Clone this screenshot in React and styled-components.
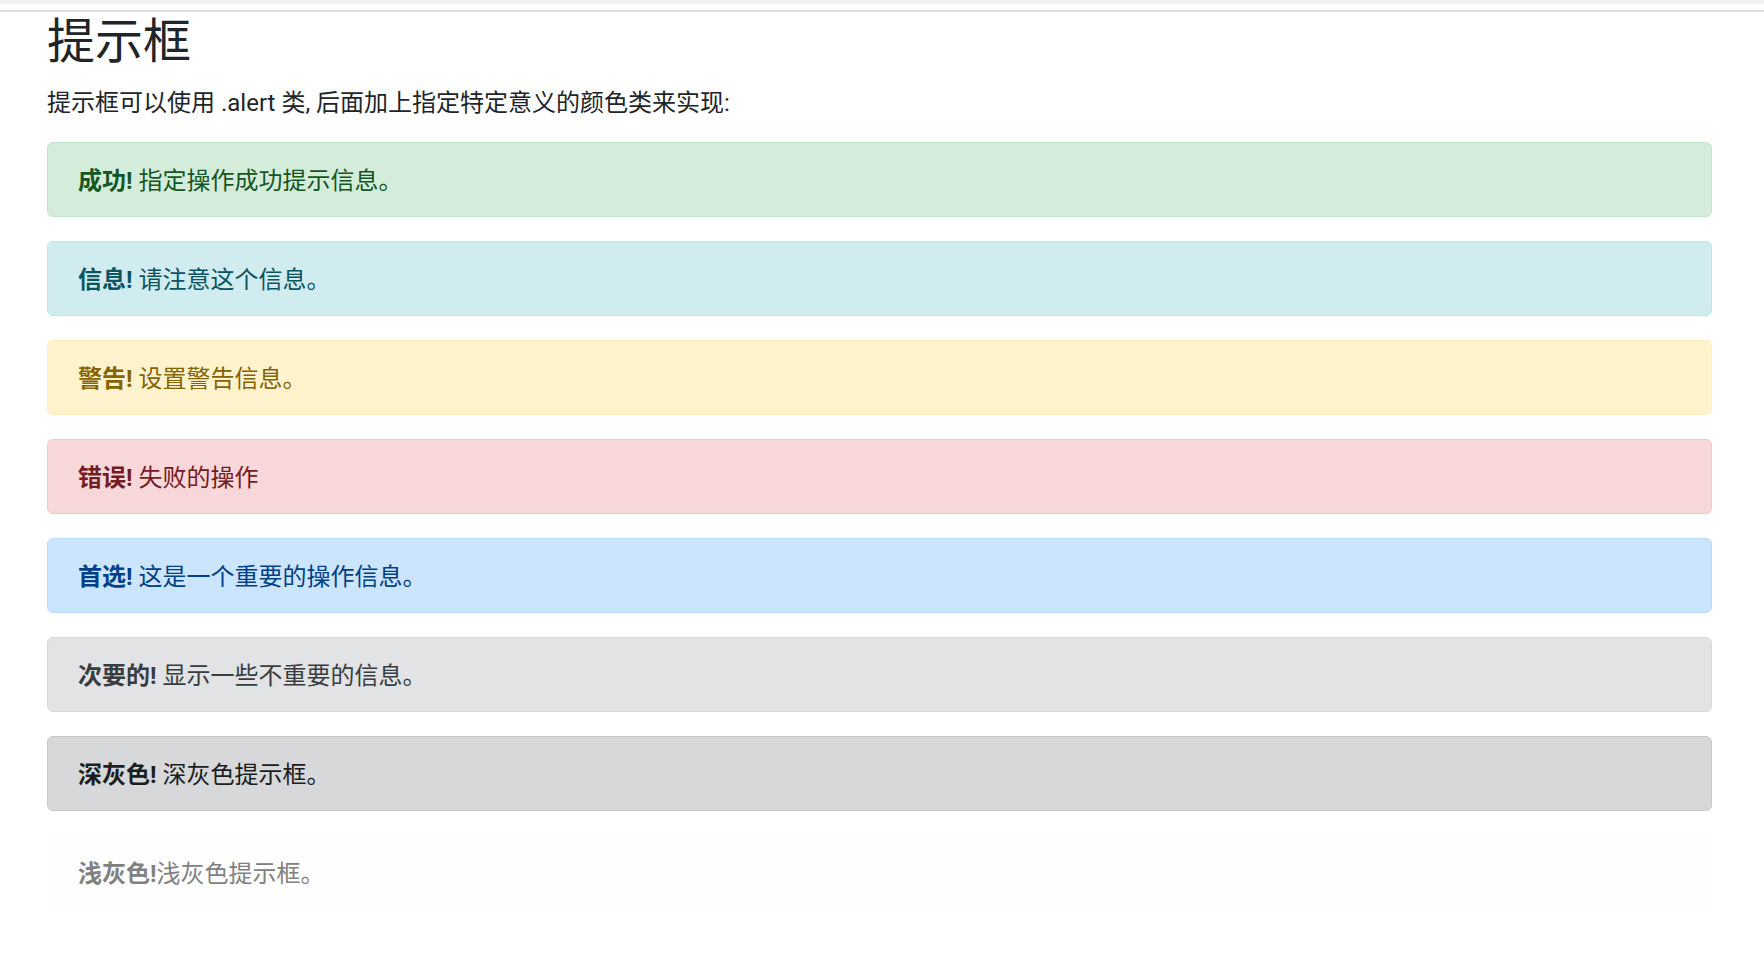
import styled, { createGlobalStyle } from "styled-components";

const alerts = [
  { kind: "success", label: "成功!", text: " 指定操作成功提示信息。" },
  { kind: "info", label: "信息!", text: " 请注意这个信息。" },
  { kind: "warning", label: "警告!", text: " 设置警告信息。" },
  { kind: "danger", label: "错误!", text: " 失败的操作" },
  { kind: "primary", label: "首选!", text: " 这是一个重要的操作信息。" },
  { kind: "secondary", label: "次要的!", text: " 显示一些不重要的信息。" },
  { kind: "dark", label: "深灰色!", text: " 深灰色提示框。" },
  { kind: "light", label: "浅灰色!", text: "浅灰色提示框。" },
];

const palette = {
  success: { bg: "#d4edda", border: "#c3e6cb", color: "#155724" },
  info: { bg: "#d1ecf1", border: "#bee5eb", color: "#0c5460" },
  warning: { bg: "#fff3cd", border: "#ffeeba", color: "#856404" },
  danger: { bg: "#f8d7da", border: "#f5c6cb", color: "#721c24" },
  primary: { bg: "#cce5ff", border: "#b8daff", color: "#004085" },
  secondary: { bg: "#e2e3e5", border: "#d6d8db", color: "#383d41" },
  dark: { bg: "#d6d8d9", border: "#c6c8ca", color: "#1b1e21" },
  light: { bg: "#fefefe", border: "#fdfdfe", color: "#818182" },
};

export default function App() {
  return (
    <>
      <GlobalStyle />
      <StyledTopStrip />
      <StyledDivider />
      <StyledContainer>
        <StyledTitle>提示框</StyledTitle>
        <StyledLead>提示框可以使用 .alert 类, 后面加上指定特定意义的颜色类来实现:</StyledLead>
        {alerts.map((alert) => (
          <StyledAlert key={alert.kind} kind={alert.kind}>
            <strong>{alert.label}</strong>
            {alert.text}
          </StyledAlert>
        ))}
      </StyledContainer>
    </>
  );
}

const GlobalStyle = createGlobalStyle`
  body {
    margin: 0;
    background: #fff;
    color: #212529;
    font-family: Roboto, "Noto Sans CJK SC", sans-serif;
    font-size: 24px;
    line-height: 1.5;
  }
`;

const StyledTopStrip = styled.div`
  height: 4px;
  background-color: #f0f1f3;
`;

const StyledDivider = styled.div`
  height: 2px;
  margin-top: 6px;
  background-color: #dedede;
`;

const StyledContainer = styled.main`
  width: 1665px;
  margin-left: 47px;
  padding-top: 1px;
`;

const StyledTitle = styled.h2`
  margin: 0 0 14px;
  font-size: 48px;
  font-weight: 400;
  line-height: 1.2;
  color: #212529;
`;

const StyledLead = styled.p`
  margin: 0 0 21px;
`;

const StyledAlert = styled.div`
  box-sizing: border-box;
  height: 75px;
  padding: 20px 30px 0;
  margin-bottom: 24px;
  border: 1px solid ${({ kind }) => palette[kind].border};
  border-radius: 6px;
  background-color: ${({ kind }) => palette[kind].bg};
  color: ${({ kind }) => palette[kind].color};
  line-height: 36px;

  strong {
    font-weight: 700;
  }
`;
